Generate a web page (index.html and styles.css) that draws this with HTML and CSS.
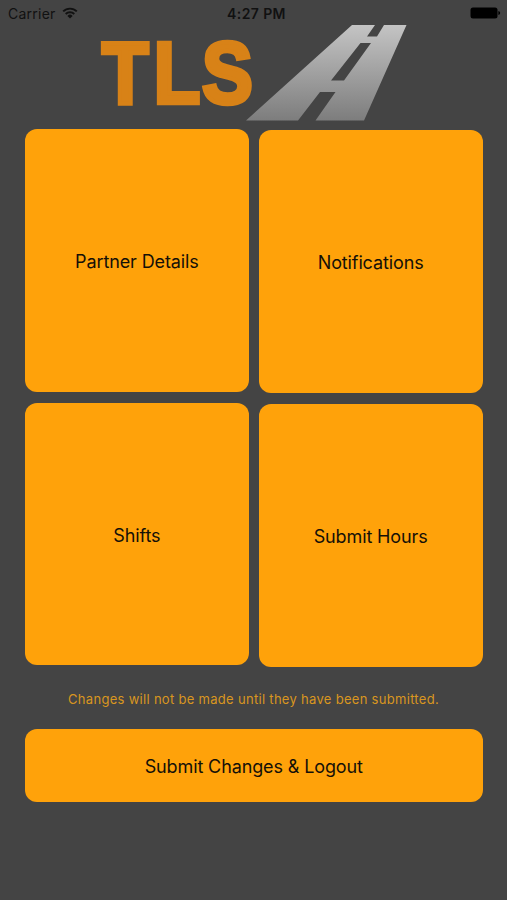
FILE: index.html
```html
<!DOCTYPE html>
<html lang="en">
<head>
  <meta charset="UTF-8" />
  <meta name="viewport" content="width=device-width, initial-scale=1.0"/>
  <title>TLS</title>
  <link rel="stylesheet" href="styles.css">
</head>
<body>
  <div class="status-bar">
    <div class="carrier">
      <span>Carrier</span>
      <svg class="wifi" viewBox="0 0 16 12">
        <path d="M1.2 4.4 A9.6 9.6 0 0 1 14.8 4.4"/>
        <path d="M3.7 7 A6.1 6.1 0 0 1 12.3 7"/>
        <path class="dot" d="M8 11.5 L5.4 8.9 A3.7 3.7 0 0 1 10.6 8.9 Z"/>
      </svg>
    </div>
    <div class="time">4:27 PM</div>
    <svg class="battery" viewBox="0 0 31 12">
      <rect x="0.5" y="0.5" width="27" height="11" rx="2.5"/>
      <path d="M28.4 4 Q30.2 4.5 30.2 6 Q30.2 7.5 28.4 8 Z"/>
    </svg>
  </div>

  <!-- logo -->
  <svg class="logo" viewBox="0 0 507 101">
    <defs>
      <linearGradient id="road" x1="0" y1="0" x2="0" y2="1">
        <stop offset="0" stop-color="#c4c4c4"/>
        <stop offset="1" stop-color="#7d7d7d"/>
      </linearGradient>
    </defs>
    <text class="logo-text" transform="scale(0.88 1)" x="115.9 174.8 229.7" y="74.8">TLS</text>
    <path fill="url(#road)" fill-rule="evenodd" d="M352 -3 H375 L367 8.5 H377 L384 -3 H406.5 L364 92.5 H315.5 L335.5 64 H320 L298 92.5 H246 Z M360.5 15 H371 L344 52.5 H331 Z"/>
  </svg>

  <div class="menu">
    <div class="column">
      <button class="tile">Partner Details</button>
      <button class="tile">Shifts</button>
    </div>
    <div class="column right">
      <button class="tile">Notifications</button>
      <button class="tile">Submit Hours</button>
    </div>
  </div>

  <p class="note">Changes will not be made until they have been submitted.</p>
  <button class="logout">Submit Changes &amp; Logout</button>
</body>
</html>
```
FILE: styles.css
```css
* {
  box-sizing: border-box;
}

body {
  margin: 0;
  height: 900px;
  overflow: hidden;
  background: #444444;
  color: #141008;
  font-family: Inter, 'Liberation Sans', sans-serif;
}

/* status bar */
.status-bar {
  display: grid;
  grid-template-columns: 1fr auto 1fr;
  align-items: center;
  height: 28px;
  padding: 0 6px 2px 8px;
  font-size: 14px;
  color: #111;
}
.carrier {
  display: flex;
  align-items: center;
  gap: 6px;
  letter-spacing: 0.25px;
}
.wifi {
  width: 16px;
  height: 12px;
  fill: none;
  stroke: #111;
  stroke-width: 1.9;
}
.wifi .dot {
  fill: #111;
  stroke: none;
}
.time {
  padding-left: 4px;
  font-weight: 600;
  letter-spacing: 0.4px;
}
.battery {
  width: 31px;
  height: 12px;
  justify-self: end;
  fill: #000;
}

/* logo */
.logo {
  display: block;
  width: 507px;
  height: 101px;
  overflow: visible;
}
.logo-text {
  font-family: 'Liberation Sans', sans-serif;
  font-size: 86.5px;
  font-weight: bold;
  fill: #d88217;
  stroke: #d88217;
  stroke-width: 4.5;
}

/* menu tiles */
.menu {
  display: flex;
  gap: 10px;
  padding: 0 24.5px 0 25px;
}
.column {
  flex: 1;
  display: flex;
  flex-direction: column;
  gap: 11.3px;
}
.column.right {
  padding-top: 1.4px;
}
.tile,
.logout {
  border: none;
  padding: 1px 0 0;
  border-radius: 12px;
  background: #ffa20a;
  color: #141008;
  font-family: inherit;
  font-size: 18px;
  letter-spacing: -0.12px;
}
.tile {
  height: 262.5px;
  padding-top: 2px;
}

.note {
  margin: 23.6px 0 21px;
  height: 18px;
  line-height: 18px;
  text-align: center;
  font-size: 13px;
  letter-spacing: 0.3px;
  color: #d9961f;
}
.logout {
  display: block;
  width: 457.5px;
  height: 73px;
  margin-left: 25px;
}
```
